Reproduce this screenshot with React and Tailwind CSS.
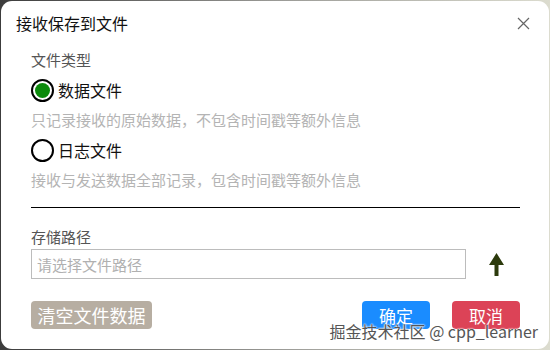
import React, { useState } from "react";

const font = { fontFamily: '"Noto Sans CJK SC", "Noto Sans", sans-serif' };

const Radio = ({ checked, label, onClick }) => (
  <button type="button" onClick={onClick} className="flex items-center h-[26px]">
    <span className="w-[23px] h-[23px] rounded-full border-2 border-black flex items-center justify-center">
      {checked && <span className="w-[15px] h-[15px] rounded-full bg-[#0b8a0b]" />}
    </span>
    <span className="ml-[4px] text-[16px] text-[#111] leading-none">{label}</span>
  </button>
);

export default function App() {
  const [type, setType] = useState("data");

  return (
    <div
      className="w-[550px] h-[350px] bg-gradient-to-r from-[#3c3c3c] via-[#9a9a96] to-[#dcdccf] overflow-hidden"
      style={font}
    >
      <div className="relative w-[548px] h-[348px] ml-px mt-px bg-white rounded-[11px] flex flex-col">
        {/* Header */}
        <div className="flex items-center justify-between h-[44px] pl-[15px] pr-[19px]">
          <h3 className="text-[16px] text-[#111] leading-none">接收保存到文件</h3>
          <button type="button" className="text-[#666]">
            <svg width="13" height="13" viewBox="0 0 13 13" stroke="currentColor" strokeWidth="1.2">
              <path d="M1 1L12 12M12 1L1 12" />
            </svg>
          </button>
        </div>

        {/* Body */}
        <div className="pl-[30px] pr-[29px] flex flex-col">
          <div className="mt-[7px] text-[15px] text-[#555] leading-none">文件类型</div>

          <div className="mt-[10px]">
            <Radio checked={type === "data"} label="数据文件" onClick={() => setType("data")} />
          </div>
          <div className="mt-[9px] text-[15px] text-[#b4b4b4] leading-none">
            只记录接收的原始数据，不包含时间戳等额外信息
          </div>

          <div className="mt-[10px]">
            <Radio checked={type === "log"} label="日志文件" onClick={() => setType("log")} />
          </div>
          <div className="mt-[9px] text-[15px] text-[#b4b4b4] leading-none">
            接收与发送数据全部记录，包含时间戳等额外信息
          </div>

          <div className="mt-[20px] h-px bg-black" />

          <div className="mt-[21px] text-[15px] text-[#555] leading-none">存储路径</div>

          <div className="mt-[5px] flex items-center">
            <input
              type="text"
              placeholder="请选择文件路径"
              className="w-[435px] h-[30px] border border-[#bcbcbc] px-[5px] text-[15px] placeholder:text-[#b0b0b0] outline-none"
            />
            <button type="button" className="ml-[23px] text-[#2c3a0c]">
              <svg width="15" height="23" viewBox="0 0 15 23" fill="currentColor">
                <path d="M7.5 0L15 12H9.5V23H5.5V12H0Z" />
              </svg>
            </button>
          </div>

          {/* Footer */}
          <div className="mt-[22px] flex items-center">
            <button
              type="button"
              className="w-[121px] h-[28px] rounded-[4px] bg-[#b7aea2] text-white text-[18px] leading-none"
            >
              清空文件数据
            </button>
            <div className="flex-1" />
            <button
              type="button"
              className="w-[68px] h-[28px] rounded-[4px] bg-[#1a8cff] text-white text-[17px] leading-none"
            >
              确定
            </button>
            <button
              type="button"
              className="ml-[22px] w-[68px] h-[28px] rounded-[4px] bg-[#dc4357] text-white text-[17px] leading-none"
            >
              取消
            </button>
          </div>
        </div>

        <div className="absolute right-[11px] bottom-[10px] text-[16px] text-[#555] leading-none [text-shadow:0_0_2px_#fff,0_0_2px_#fff,0_0_1px_#fff]">
          掘金技术社区 @ cpp_learner
        </div>
      </div>
    </div>
  );
}
